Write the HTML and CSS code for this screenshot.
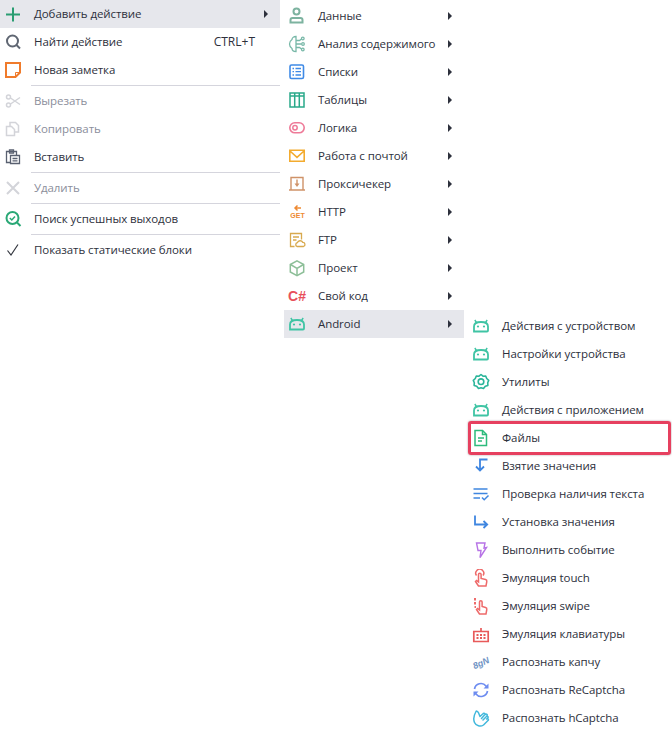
FILE: index.html
```html
<!DOCTYPE html>
<html lang="ru">
<head>
<meta charset="utf-8">
<title>Меню</title>
<link rel="stylesheet" href="styles.css">
</head>
<body>
<div class="cascade">
  <div class="menu menu-main">
    <div class="row active"><svg class="ico" viewBox="0 0 18 18"><path d="M9 2.500v14M2 9.500h14" stroke="#2a9d72" stroke-width="2" fill="none"/></svg><span class="label">Добавить действие</span><i class="arrow"></i></div>
    <div class="row"><svg class="ico" viewBox="0 0 18 18"><circle cx="8.500" cy="8" r="5.500" stroke="#5f6672" stroke-width="2" fill="none"/><path d="M12.500 12l3.500 3.500" stroke="#5f6672" stroke-width="2" fill="none"/></svg><span class="label">Найти действие</span><span class="shortcut">CTRL+T</span></div>
    <div class="row"><svg class="ico" viewBox="0 0 18 18"><path d="M2 2h14v9.500L11.500 16H2z" stroke="#f07b2b" stroke-width="2" fill="none"/><path d="M11.500 15.500v-4h4" stroke="#f07b2b" stroke-width="1" fill="none"/></svg><span class="label">Новая заметка</span></div>
    <div class="sep"></div>
    <div class="row off"><svg class="ico" viewBox="0 0 18 18"><g stroke="#d3d4d9" fill="none" stroke-width="1.500"><circle cx="4.500" cy="5" r="2"/><circle cx="4.500" cy="13" r="2"/><path d="M6.500 6l9.500 6.500M6.500 12L16 5.500"/></g></svg><span class="label">Вырезать</span></div>
    <div class="row off"><svg class="ico" viewBox="0 0 18 18"><g stroke="#d3d4d9" fill="none" stroke-width="1.500"><path d="M6 6V2.500h5.500l3 3V12H11"/><path d="M2.500 6.500h5l3 3v6h-8z"/></g></svg><span class="label">Копировать</span></div>
    <div class="row"><svg class="ico" viewBox="0 0 18 18"><g stroke="#596070" fill="none" stroke-width="1.300"><path d="M6 14.500H2.500v-11h10V7"/><path d="M5.500 2h4v3h-4z"/><path d="M6.500 7.500h9v8h-9zM8.500 10.500h5M8.500 12.800h5"/></g></svg><span class="label">Вставить</span></div>
    <div class="sep"></div>
    <div class="row off"><svg class="ico" viewBox="0 0 18 18"><path d="M3 3l12 12M15 3L3 15" stroke="#d3d4d9" stroke-width="2" fill="none"/></svg><span class="label">Удалить</span></div>
    <div class="sep"></div>
    <div class="row"><svg class="ico" viewBox="0 0 18 18"><circle cx="8.500" cy="8" r="6" stroke="#2aa876" stroke-width="2" fill="none"/><path d="M5.800 8l2 2 3.200-3.500" stroke="#2aa876" stroke-width="1.500" fill="none"/><path d="M13 12.500l3.500 3.500" stroke="#2aa876" stroke-width="2" fill="none"/></svg><span class="label">Поиск успешных выходов</span></div>
    <div class="sep"></div>
    <div class="row"><svg class="ico" viewBox="0 0 18 18"><path d="M3.500 9.500l3.500 4.500L14 3.500" stroke="#33363f" stroke-width="1.200" fill="none"/></svg><span class="label">Показать статические блоки</span></div>
  </div>

  <div class="menu menu-sub">
    <div class="row"><svg class="ico" viewBox="0 0 18 18"><g stroke="#7db3a0" stroke-width="2" fill="none"><circle cx="8.500" cy="4.500" r="3"/><path d="M2.500 15.500v-2.500c0-1.500 1-2 2-2h8c1 0 2 .5 2 2v2.500z"/></g></svg><span class="label">Данные</span><i class="arrow"></i></div>
    <div class="row"><svg class="ico" viewBox="0 0 18 18"><g stroke="#78b8a8" stroke-width="1.300" fill="none"><path d="M8 1.500C5.500 1.500 4 3 4 4.500 2.500 5.500 1.500 7.500 1.500 9S2.500 12.500 4 13.500c0 1.500 1.500 3 4 3z"/><path d="M8 5.500h3.500l2-1.500M8 9h5.500M8 12.500h3.500l2 1.500"/><circle cx="14.800" cy="3.500" r="1.300"/><circle cx="15" cy="9" r="1.300"/><circle cx="14.800" cy="14.500" r="1.300"/></g></svg><span class="label">Анализ содержимого</span><i class="arrow"></i></div>
    <div class="row"><svg class="ico" viewBox="0 0 18 18"><g fill="none" stroke="#3f8ae6"><rect x="2" y="2" width="13.500" height="13.500" rx="1.500" stroke-width="1.600"/><path d="M7.500 5.500h5.500M7.500 8.700h5.500M7.500 12h5.500M4.500 5.500h1.500M4.500 8.700h1.500M4.500 12h1.500" stroke-width="1.300"/></g></svg><span class="label">Списки</span><i class="arrow"></i></div>
    <div class="row"><svg class="ico" viewBox="0 0 18 18"><path d="M2 2h14v14H2zM2 5h14M6.700 2v14M11.300 2v14" fill="none" stroke="#2aa98a" stroke-width="1.500"/></svg><span class="label">Таблицы</span><i class="arrow"></i></div>
    <div class="row"><svg class="ico" viewBox="0 0 18 18"><rect x="1.800" y="3.800" width="14.400" height="10" rx="5" fill="none" stroke="#ee7a98" stroke-width="1.600"/><circle cx="7" cy="8.800" r="2.200" fill="none" stroke="#ee7a98" stroke-width="1.500"/></svg><span class="label">Логика</span><i class="arrow"></i></div>
    <div class="row"><svg class="ico" viewBox="0 0 18 18"><path d="M1.800 3.300h14.400v11H1.800zM2 4L9 10.300l7-6.300" fill="none" stroke="#f3ab2f" stroke-width="1.600"/></svg><span class="label">Работа с почтой</span><i class="arrow"></i></div>
    <div class="row"><svg class="ico" viewBox="0 0 18 18"><g fill="none" stroke="#cf9268" stroke-width="1.400"><path d="M3 14.500V2.500h12v12M1 15h16"/><path d="M9 4.500v5.500"/></g><path d="M6.500 8.500h5L9 12z" fill="#cf9268"/></svg><span class="label">Проксичекер</span><i class="arrow"></i></div>
    <div class="row"><svg class="ico" viewBox="0 0 18 18"><path d="M13 5H7M9.500 2.500L7 5l2.500 2.500" fill="none" stroke="#ee8a33" stroke-width="1.500"/><text x="9.500" y="15" class="get">GET</text></svg><span class="label">HTTP</span><i class="arrow"></i></div>
    <div class="row"><svg class="ico" viewBox="0 0 18 18"><g fill="none" stroke="#d8a94e" stroke-width="1.300"><path d="M6.500 15.500H2.500v-13h11v6"/><path d="M5 6h6M5 9h3.500"/><path d="M9 15.500a2 2 0 0 1 .3-3.800 3 3 0 0 1 5.500-.3 2.100 2.100 0 0 1 .7 4.100z"/></g></svg><span class="label">FTP</span><i class="arrow"></i></div>
    <div class="row"><svg class="ico" viewBox="0 0 18 18"><g fill="none" stroke="#8dbf98" stroke-width="1.500"><path d="M9 1.800l6.700 3.700v7.500L9 16.700 2.300 13V5.500z"/><path d="M2.500 5.500L9 9.300l6.500-3.800M9 9.300v7.200"/></g></svg><span class="label">Проект</span><i class="arrow"></i></div>
    <div class="row"><span class="csharp">C#</span><span class="label">Свой код</span><i class="arrow"></i></div>
    <div class="row active"><svg class="ico" viewBox="0 0 18 18"><g fill="none" stroke="#3fc4a4" stroke-width="1.800"><path d="M2 14.500V9.500C2 6.500 5 5 9 5s7 1.500 7 4.500v4c0 .6-.4 1-1 1H3z"/><path d="M4.500 5.500L2.800 3M13.500 5.500l1.700-2.500" stroke-width="1.400"/></g><circle cx="6" cy="9.500" r="1.100" fill="#3fc4a4"/><circle cx="12" cy="9.500" r="1.100" fill="#3fc4a4"/></svg><span class="label">Android</span><i class="arrow"></i></div>
  </div>

  <div class="menu menu-sub3">
    <div class="row"><svg class="ico" viewBox="0 0 18 18"><g fill="none" stroke="#3fc4a4" stroke-width="1.800"><path d="M2 14.500V9.500C2 6.500 5 5 9 5s7 1.500 7 4.500v4c0 .6-.4 1-1 1H3z"/><path d="M4.500 5.500L2.800 3M13.500 5.500l1.700-2.500" stroke-width="1.400"/></g><circle cx="6" cy="9.500" r="1.100" fill="#3fc4a4"/><circle cx="12" cy="9.500" r="1.100" fill="#3fc4a4"/></svg><span class="label">Действия с устройством</span></div>
    <div class="row"><svg class="ico" viewBox="0 0 18 18"><g fill="none" stroke="#3fc4a4" stroke-width="1.800"><path d="M2 14.500V9.500C2 6.500 5 5 9 5s7 1.500 7 4.500v4c0 .6-.4 1-1 1H3z"/><path d="M4.500 5.500L2.800 3M13.500 5.500l1.700-2.500" stroke-width="1.400"/></g><circle cx="6" cy="9.500" r="1.100" fill="#3fc4a4"/><circle cx="12" cy="9.500" r="1.100" fill="#3fc4a4"/></svg><span class="label">Настройки устройства</span></div>
    <div class="row"><svg class="ico" viewBox="0 0 18 18"><g fill="none" stroke="#2bb59a" stroke-width="1.600" stroke-linejoin="round"><path d="M9 1.500l2 1.700 2.700-.2 1 2.500 2 1.900-1 2.300.2 2.700-2.600.8L11.500 15.500 9 14.800l-2.500.7-1.800-2.300-2.600-.8.200-2.700-1-2.300 2-1.900 1-2.500 2.700.2z"/><circle cx="9" cy="8.700" r="2.800"/></g></svg><span class="label">Утилиты</span></div>
    <div class="row"><svg class="ico" viewBox="0 0 18 18"><g fill="none" stroke="#3fc4a4" stroke-width="1.800"><path d="M2 14.500V9.500C2 6.500 5 5 9 5s7 1.500 7 4.500v4c0 .6-.4 1-1 1H3z"/><path d="M4.500 5.500L2.800 3M13.500 5.500l1.700-2.500" stroke-width="1.400"/></g><circle cx="6" cy="9.500" r="1.100" fill="#3fc4a4"/><circle cx="12" cy="9.500" r="1.100" fill="#3fc4a4"/></svg><span class="label">Действия с приложением</span></div>
    <div class="row highlighted"><svg class="ico" viewBox="0 0 18 18"><g fill="none" stroke="#2dbb7c" stroke-width="1.500"><path d="M3 1.500h7.500l4 4v11H3z"/><path d="M10.500 1.500v4h4M6 9h6M6 12h4"/></g></svg><span class="label">Файлы</span></div>
    <div class="row"><svg class="ico" viewBox="0 0 18 18"><path d="M15.500 2.500H8V13M4 9.500l4 4 4-4" fill="none" stroke="#3f86e0" stroke-width="1.800"/></svg><span class="label">Взятие значения</span></div>
    <div class="row"><svg class="ico" viewBox="0 0 18 18"><path d="M1.500 4h14M1.500 8.500h14M1.500 13h6.500M10 12.500l2.200 2.200 4.300-4.200" fill="none" stroke="#3f86e0" stroke-width="1.500"/></svg><span class="label">Проверка наличия текста</span></div>
    <div class="row"><svg class="ico" viewBox="0 0 18 18"><path d="M3 2.500v9h12M11.500 8l3.700 3.500-3.700 3.500" fill="none" stroke="#3f86e0" stroke-width="1.800"/></svg><span class="label">Установка значения</span></div>
    <div class="row"><svg class="ico" viewBox="0 0 18 18"><path d="M4.500 2h8.500l-1 5 2.500-.5L8 16.500l1-7H6z" fill="none" stroke="#b773e6" stroke-width="1.400"/></svg><span class="label">Выполнить событие</span></div>
    <div class="row"><svg class="ico" viewBox="0 0 18 18"><g fill="none" stroke="#ee6a6a" stroke-width="1.500"><path d="M6.500 17l-3-4.500 1-1 2 1.500V5.500a1.300 1.300 0 0 1 2.600 0v4l4.500 1c1 .3 1.400 1 1.200 2l-.8 4.500z"/><path d="M4.500 6.500a4 4 0 1 1 6.500 0"/></g></svg><span class="label">Эмуляция touch</span></div>
    <div class="row"><svg class="ico" viewBox="0 0 18 18"><g fill="none" stroke="#ee6a6a" stroke-width="1.500"><path d="M7.500 17l-3-4.500 1-1 2 1.500V5a1.300 1.300 0 0 1 2.600 0v4.500l3.500 1c1 .3 1.400 1 1.200 2l-.8 4.500z"/></g><path d="M2 1h2v2.500H2zM2 5h2v2.500H2zM2.500 9h1.500v2H2.500z" fill="#ee6a6a"/></svg><span class="label">Эмуляция swipe</span></div>
    <div class="row"><svg class="ico" viewBox="0 0 18 18"><g fill="none" stroke="#e85a5a"><path d="M1.800 6.500h14.400v10H1.800zM9 6V3" stroke-width="1.700"/><path d="M4.500 10h9M4.500 13h9" stroke-width="2" stroke-dasharray="2 1.500"/></g></svg><span class="label">Эмуляция клавиатуры</span></div>
    <div class="row"><svg class="ico" viewBox="0 0 18 18"><text x="9" y="13" class="cap" transform="rotate(-24 9 10)">8gN</text></svg><span class="label">Распознать капчу</span></div>
    <div class="row"><svg class="ico" viewBox="0 0 18 18"><g fill="none" stroke="#6d8cf0" stroke-width="1.700"><path d="M2.500 8a6.500 6.500 0 0 1 11.500-3l1.500 1.800"/><path d="M15.500 10a6.500 6.500 0 0 1-11.500 3l-1.500-1.800"/></g><path d="M16.500 2.500v5h-5zM1.500 15.500v-5h5z" fill="#6d8cf0"/></svg><span class="label">Распознать ReCaptcha</span></div>
    <div class="row"><svg class="ico" viewBox="0 0 18 18"><path d="M4 2.500C2 6 1 10 2.500 13.500c1.500 3.500 6 4.500 9 2.500l4.500-4.500c1-1-.3-2.300-1.300-1.500l1-1c1-1-.3-2.500-1.300-1.500l.6-.8c.7-1-.6-2.200-1.600-1.300l-.4-.4c-.5-1-1.600-.8-2.300 0L8 7.500 6.500 3.800C5.900 2.400 4.500 1.700 4 2.500zM9.500 9.500l3-3.500M11 11l3-3" fill="none" stroke="#42b8dc" stroke-width="1.500" stroke-linecap="round" stroke-linejoin="round"/></svg><span class="label">Распознать hCaptcha</span></div>
  </div>
</div>
</body>
</html>
```

FILE: styles.css
```css
html, body {
  margin: 0;
  padding: 0;
  background: #fff;
}
body {
  width: 672px;
  height: 732px;
  overflow: hidden;
  font-family: "Open Sans", "Noto Sans", sans-serif;
  font-size: 11.5px;
  letter-spacing: -0.08px;
  color: #2d303c;
}
.cascade {
  display: flex;
  align-items: flex-start;
}
.menu-main {
  width: 280px;
  flex: none;
}
.menu-sub {
  width: 180px;
  flex: none;
  margin: 2px 0 0 4px;
}
.menu-sub3 {
  width: 204px;
  flex: none;
  margin: 312px 0 0 4px;
}
.row {
  height: 28px;
  display: flex;
  align-items: center;
  padding: 0 12px 0 4px;
  box-sizing: border-box;
  position: relative;
  white-space: nowrap;
}
.row.active {
  background: #e6e7ec;
}
.row.off .label {
  color: #8b8e9b;
}
.ico {
  width: 18px;
  height: 18px;
  flex: none;
  margin-right: 12px;
}
.label {
  flex: 1;
  padding-bottom: 2px;
}
.shortcut {
  margin-right: 13px;
  padding-bottom: 2px;
  font-size: 12px;
  letter-spacing: 0;
}
.arrow {
  width: 0;
  height: 0;
  border-left: 4px solid #2d303c;
  border-top: 4px solid transparent;
  border-bottom: 4px solid transparent;
}
.sep {
  height: 1px;
  margin: 1px 0 1px 31px;
  background: #d5d5dd;
}
.highlighted::after {
  content: "";
  position: absolute;
  left: 0;
  right: 1px;
  top: -3px;
  bottom: -3px;
  border: 3px solid #e6405f;
  border-radius: 3px;
  box-shadow: 0 0 2px rgba(90, 60, 70, .55);
}
.csharp {
  width: 18px;
  margin-right: 12px;
  padding-bottom: 1px;
  flex: none;
  font-family: "Liberation Sans", sans-serif;
  font-weight: 700;
  font-size: 14px;
  letter-spacing: 0;
  color: #e8505b;
  text-align: center;
  white-space: nowrap;
}
.get {
  font-family: "Liberation Sans", sans-serif;
  font-size: 7px;
  font-weight: 700;
  letter-spacing: 0;
  fill: #ee8a33;
  text-anchor: middle;
}
.cap {
  font-family: "Liberation Sans", sans-serif;
  font-style: italic;
  font-weight: 700;
  font-size: 9px;
  letter-spacing: 0;
  fill: #6f93c4;
  text-anchor: middle;
}
```
